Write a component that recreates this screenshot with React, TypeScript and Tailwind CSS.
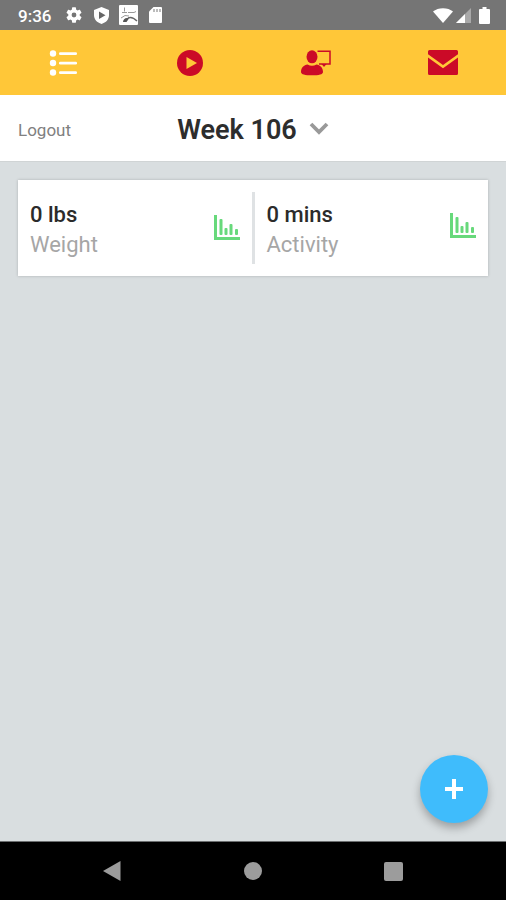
import React from "react";

function ChartIcon() {
  return (
    <svg width="26" height="26" viewBox="0 0 26 26" fill="#67d97b" aria-hidden="true">
      <path d="M0 0h3v22h23v3H0z" />
      <rect x="5.500" y="4" width="3" height="16" rx="1" />
      <rect x="10.500" y="13" width="3" height="7" rx="1" />
      <rect x="15.500" y="9" width="3" height="11" rx="1" />
      <rect x="21" y="14" width="3" height="6" rx="1" />
    </svg>
  );
}

function StatusBar() {
  return (
    <div className="flex h-[30px] items-center justify-between bg-[#757575] pl-[18px] pr-4 text-white">
      <div className="flex items-center">
        <span className="w-12 pt-px text-[17px] leading-[30px] font-medium">9:36</span>
        <svg width="16" height="16" viewBox="2 2 20 20" fill="#fff" aria-hidden="true">
          <path d="M19.14 12.94c.04-.3.06-.61.06-.94s-.02-.64-.07-.94l2.03-1.58a.49.49 0 0 0 .12-.61l-1.92-3.32a.49.49 0 0 0-.59-.22l-2.39.96a7 7 0 0 0-1.62-.94l-.36-2.54a.48.48 0 0 0-.48-.41h-3.84a.48.48 0 0 0-.47.41l-.36 2.54c-.59.24-1.13.57-1.62.94l-2.39-.96a.48.48 0 0 0-.59.22L2.74 8.87a.48.48 0 0 0 .12.61l2.03 1.58a7.6 7.6 0 0 0 0 1.88l-2.03 1.58a.49.49 0 0 0-.12.61l1.92 3.32c.12.22.37.29.59.22l2.39-.96c.5.38 1.03.7 1.62.94l.36 2.54c.05.24.24.41.48.41h3.84c.24 0 .44-.17.47-.41l.36-2.54a7 7 0 0 0 1.62-.94l2.39.96c.22.08.47 0 .59-.22l1.92-3.32a.48.48 0 0 0-.12-.61zM12 15a3 3 0 1 1 0-6 3 3 0 0 1 0 6z" />
        </svg>
        <svg className="ml-3" width="15" height="17" viewBox="0 0 15 17" aria-hidden="true">
          <path d="M7.500 0L15 3v5c0 4.500-3 7.500-7.500 9C3 15.500 0 12.500 0 8V3z" fill="#fff" />
          <path d="M5 4.500l6.500 3.800L5 12z" fill="#666" />
        </svg>
        <svg className="ml-2.5" width="19" height="20" viewBox="0 0 19 20" aria-hidden="true">
          <rect width="19" height="20" rx="1" fill="#fff" />
          <g fill="none" stroke="#999" strokeWidth="1">
            <path d="M3 7.500h5M5.500 2.500v4M9 7.500h6l2-1" />
            <path d="M2 13l4-2.500 4 .5" />
            <path d="M9 13c3-1.500 6 0 9 3" stroke="#666" strokeWidth="1.500" />
          </g>
          <path d="M4 17c0-3 3-5 6-3.500L7.500 17z" fill="#555" />
        </svg>
        <svg className="ml-[11px]" width="13" height="16" viewBox="0 0 13 16" aria-hidden="true">
          <path d="M4.500 0H12a1 1 0 0 1 1 1v14a1 1 0 0 1-1 1H1a1 1 0 0 1-1-1V4.500z" fill="#fff" />
          <path d="M5 2v3M8 2v3M11 2v3" stroke="#999" strokeWidth="1.300" />
        </svg>
      </div>
      <div className="flex items-center">
        <svg width="20" height="15" viewBox="0 0 20 15" aria-hidden="true">
          <path d="M0 3.500C5-1 15-1 20 3.500L10 15z" fill="#fff" />
        </svg>
        <svg className="ml-[3px]" width="15" height="15" viewBox="0 0 15 15" aria-hidden="true">
          <path d="M15 0v15H0z" fill="#a9a9a9" />
          <path d="M9 6v9H0z" fill="#fff" />
        </svg>
        <svg className="ml-2" width="11" height="17" viewBox="0 0 11 17" aria-hidden="true">
          <path d="M3.500 0h4v2H10a1 1 0 0 1 1 1v13a1 1 0 0 1-1 1H1a1 1 0 0 1-1-1V3a1 1 0 0 1 1-1h2.500z" fill="#fff" />
        </svg>
      </div>
    </div>
  );
}

function TabBar() {
  const tab = "flex items-center justify-center";
  return (
    <nav className="grid h-[65px] grid-cols-4 bg-[#ffc738]">
      <button aria-label="List" className={tab}>
        <svg width="28" height="26" viewBox="0 0 28 26" fill="#fff" aria-hidden="true">
          <circle cx="4" cy="3.500" r="3.200" />
          <circle cx="4" cy="13" r="3.200" />
          <circle cx="4" cy="22.500" r="3.200" />
          <rect x="10" y="2.200" width="18" height="2.800" rx="1.300" />
          <rect x="10" y="11.700" width="18" height="2.800" rx="1.300" />
          <rect x="10" y="21.200" width="18" height="2.800" rx="1.300" />
        </svg>
      </button>
      <button aria-label="Videos" className={tab}>
        <svg width="26" height="26" viewBox="0 0 26 26" aria-hidden="true">
          <circle cx="13" cy="13" r="13" fill="#cb0a27" />
          <path d="M9.500 7l10.500 6-10.500 6z" fill="#ffc738" />
        </svg>
      </button>
      <button aria-label="Coach" className={tab}>
        <svg width="30" height="26" viewBox="0 0 30 26" fill="#cb0a27" aria-hidden="true">
          <ellipse cx="11" cy="6.800" rx="5.500" ry="6.500" />
          <path d="M0 22c0-4.500 3-7 6.500-7.500 3 1.800 6 1.800 9 0C19 15 22 17.500 22 22c0 2.500-4 3.300-11 3.300S0 24.500 0 22z" />
          <path d="M16.500 1.200H29v12.800H18" fill="none" stroke="#cb0a27" strokeWidth="1.500" />
          <path d="M20.500 14h5L23 17z" />
        </svg>
      </button>
      <button aria-label="Messages" className={tab}>
        <svg width="30" height="25" viewBox="0 0 30 25" fill="#cb0a27" aria-hidden="true">
          <path d="M1.500 0h27A1.500 1.500 0 0 1 30 1.500v2.700L15 15 0 4.200V1.500A1.500 1.500 0 0 1 1.500 0z" />
          <path d="M0 7.500L15 18.300 30 7.500v16a1.500 1.500 0 0 1-1.500 1.500h-27A1.500 1.500 0 0 1 0 23.500z" />
        </svg>
      </button>
    </nav>
  );
}

function Header() {
  return (
    <header className="grid h-[67px] grid-cols-[1fr_auto_1fr] items-center border-b border-[#d0d4d5] bg-white px-[18px] pt-[3px]">
      <button className="justify-self-start text-[17px] leading-6 text-[#808080]">Logout</button>
      <button className="flex items-center gap-3 text-[27px] leading-8 font-semibold text-[#2d2d2d]">
        Week 106
        <svg width="20" height="16" viewBox="0 0 20 16" aria-hidden="true">
          <path d="M2 2l8 8 8-8" fill="none" stroke="#999" strokeWidth="3.800" />
        </svg>
      </button>
    </header>
  );
}

function Metric({ value, label, children }: { value: string; label: string; children: React.ReactNode }) {
  return (
    <div className="flex flex-1 items-center justify-between px-3">
      <div className="pt-[3px]">
        <p className="text-[22px] leading-[30px] font-medium text-[#2b2b2b]">{value}</p>
        <p className="text-[22px] leading-[30px] text-[#a6a6a6]">{label}</p>
      </div>
      {children}
    </div>
  );
}

export default function App() {
  return (
    <div className="flex min-h-screen flex-col bg-[#d9dee0] font-['Roboto',sans-serif]">
      <StatusBar />
      <TabBar />
      <Header />
      <main className="flex-1 px-[18px] pt-[18px]">
        <section className="flex bg-white py-3 shadow-[0_0_3px_rgba(0,0,0,0.2)]">
          <Metric value="0 lbs" label="Weight">
            <button aria-label="Weight chart"><ChartIcon /></button>
          </Metric>
          <div className="h-[72px] w-[3px] bg-[#dfe2e4]" />
          <Metric value="0 mins" label="Activity">
            <button aria-label="Activity chart" className="pb-1"><ChartIcon /></button>
          </Metric>
        </section>
      </main>
      <button
        aria-label="Add"
        className="fixed right-[18px] bottom-[77px] flex size-[68px] items-center justify-center rounded-full bg-[#3fbcfc] shadow-[0_5px_9px_rgba(0,0,0,0.28)]"
      >
        <svg width="18" height="20" viewBox="0 0 18 20" aria-hidden="true">
          <path d="M9 0v20M0 10h18" stroke="#fff" strokeWidth="4" />
        </svg>
      </button>
      <nav className="grid h-[59px] grid-cols-3 border-t border-[#6c6f70] bg-black px-[42px]">
        <button aria-label="Back" className="flex items-center justify-center">
          <svg width="18" height="20" viewBox="0 0 18 20" aria-hidden="true">
            <path d="M17.500 0v20L0 10z" fill="#9c9c9c" />
          </svg>
        </button>
        <button aria-label="Home" className="flex items-center justify-center">
          <span className="size-[18px] rounded-full bg-[#9c9c9c]" />
        </button>
        <button aria-label="Recent apps" className="flex items-center justify-center">
          <span className="size-[19px] rounded-xs bg-[#9c9c9c]" />
        </button>
      </nav>
    </div>
  );
}
